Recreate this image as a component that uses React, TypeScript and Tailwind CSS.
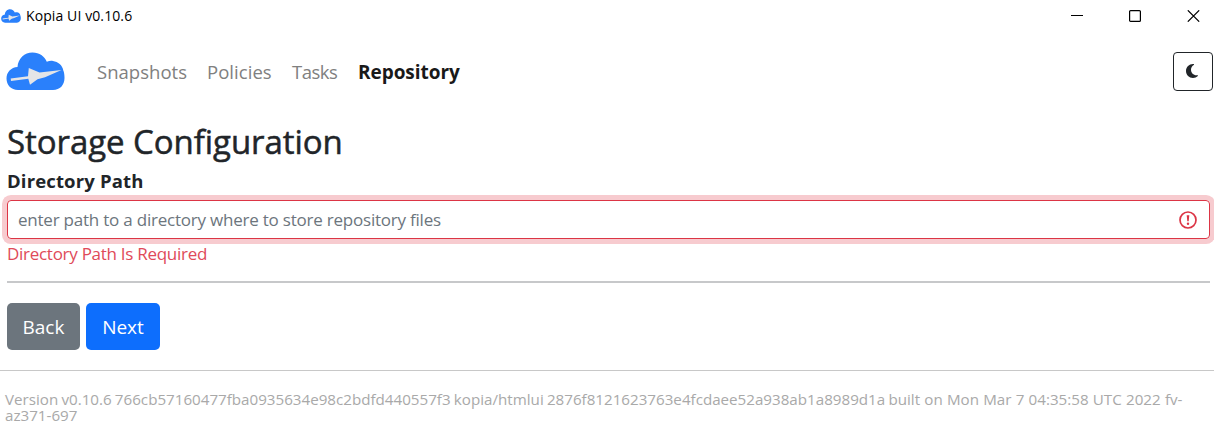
import React from "react";
import { FaMoon } from "react-icons/fa6";

function CloudLogo({ className }: { className: string }) {
  return (
    <svg className={className} viewBox="0 0 59 39" preserveAspectRatio="none" aria-hidden="true">
      <path
        d="M12 38C5 38 .5 33 .5 26.500C.5 20 5 15.500 11.500 15C12 6.500 18.500.5 26.500.5C33.500.5 38.500 4.200 40.800 9.800C43 8.900 45 8.700 47 9C52 9.700 56.500 13.200 57.300 18.500C58.200 20.500 58.500 23 58.500 26C58.500 33 54 38 47 38Z"
        fill="#2a80fb"
      />
      <path d="M4.700 26.500L22 24.200L22.800 16L33.500 20.600L55.500 18L39 25.200L31.500 27.200L24 32.800L22.300 26.700L5 29Z" fill="#e4e5e7" />
    </svg>
  );
}

function TitleBar() {
  return (
    <header className="flex h-8 items-center justify-between pl-px pr-[14px] text-black">
      <div className="flex items-center gap-[5px]">
        <CloudLogo className="h-[14px] w-5" />
        <span className="whitespace-nowrap text-[14px] leading-5 tracking-[0.1px]">Kopia UI v0.10.6</span>
      </div>
      <div className="flex items-center gap-[46px]">
        <svg className="h-3 w-3" viewBox="0 0 12 12"><path d="M0 5.500H12" stroke="currentColor" /></svg>
        <svg className="h-3 w-3" viewBox="0 0 12 12"><rect x=".6" y=".6" width="10.800" height="10.800" rx="1" fill="none" stroke="currentColor" strokeWidth="1.200" /></svg>
        <svg className="h-3 w-[13px]" viewBox="0 0 13 12"><path d="M.8.3L12.200 11.700M12.200.3L.8 11.700" stroke="currentColor" strokeWidth="1.150" /></svg>
      </div>
    </header>
  );
}

function NavBar() {
  return (
    <nav className="flex h-20 items-center pb-[2px] pl-[6px] pr-px">
      <CloudLogo className="h-[39px] w-[59px]" />
      <div className="ml-8 flex grow gap-5 whitespace-nowrap pt-[2px] text-[18.500px] leading-[30px] text-[#808080]">
        <a className="w-[90px] tracking-[0.03px]">Snapshots</a>
        <a className="w-[65px] tracking-[0.05px]">Policies</a>
        <a className="w-[45px] tracking-[-0.5px]">Tasks</a>
        <a className="pl-px text-[19px] font-bold tracking-[-0.05px] text-[#191919]">Repository</a>
      </div>
      <button className="flex h-[39px] w-10 items-center justify-center rounded-[4px] border border-[#212529] pr-[2px] text-[#212529]">
        <FaMoon className="h-4 w-4" />
      </button>
    </nav>
  );
}

export default function App() {
  return (
    <div className="h-[426px] overflow-hidden bg-white font-['Open_Sans','Noto_Sans',sans-serif] text-[#212529]">
      <TitleBar />
      <NavBar />
      <main className="pl-[7px] pr-1">
        <h1 className="h-[54px] whitespace-nowrap pt-[9px] text-[33px] font-medium leading-[42px] tracking-[-0.06px] [-webkit-text-stroke:0.5px_#212529]">Storage Configuration</h1>
        <label className="block h-[34px] whitespace-nowrap text-[18.500px] font-bold leading-[30px] tracking-[0.15px]">Directory Path</label>
        <div className="flex h-[39px] items-center justify-between rounded-[4px] border border-[#dc3545] pl-[10px] pr-3 shadow-[0_0_0_5px_#f7cbcf]">
          <span className="whitespace-nowrap text-[17px] leading-[27px] tracking-[-0.22px] text-[#6c757d]">enter path to a directory where to store repository files</span>
          <svg className="h-[18px] w-[18px]" viewBox="0 0 18 18" fill="#dc3545">
            <circle cx="9" cy="9" r="8" fill="none" stroke="#dc3545" strokeWidth="1.700" />
            <path d="M7.700 4.200H10.300L9.700 10.300H8.300Z" />
            <circle cx="9" cy="12.800" r="1.200" />
          </svg>
        </div>
        <p className="h-[42px] whitespace-nowrap pt-[2px] text-[17px] leading-[26px] tracking-[-0.28px] text-[#e04a59]">Directory Path Is Required</p>
        <hr className="h-[2px] border-0 bg-[#c7c8ca]" />
        <div className="flex gap-[6px] pt-5 text-[19px] leading-[30px] text-white">
          <button className="h-[47px] w-[73px] rounded-[5px] bg-[#6c757d]">Back</button>
          <button className="h-[47px] w-[74px] rounded-[5px] bg-[#0d6efd]">Next</button>
        </div>
      </main>
      <footer className="mt-5 whitespace-nowrap border-t border-[#c8c8c8] pl-[5px] pt-5 text-[15.170px] leading-4 text-[#a9a9a9]">
        <div>
          <span className="[word-spacing:-0.7px]">Version v0.10.6 766cb57160477fba0935634e98c2bdfd440557f3 kopia/htmlui 2876f8121623763e4fcdaee52a938ab1a8989d1a </span>
          <span className="[word-spacing:0.3px]">built on Mon Mar 7 04:35:58 UTC 2022 fv-</span>
        </div>
        <div>az371-697</div>
      </footer>
    </div>
  );
}
